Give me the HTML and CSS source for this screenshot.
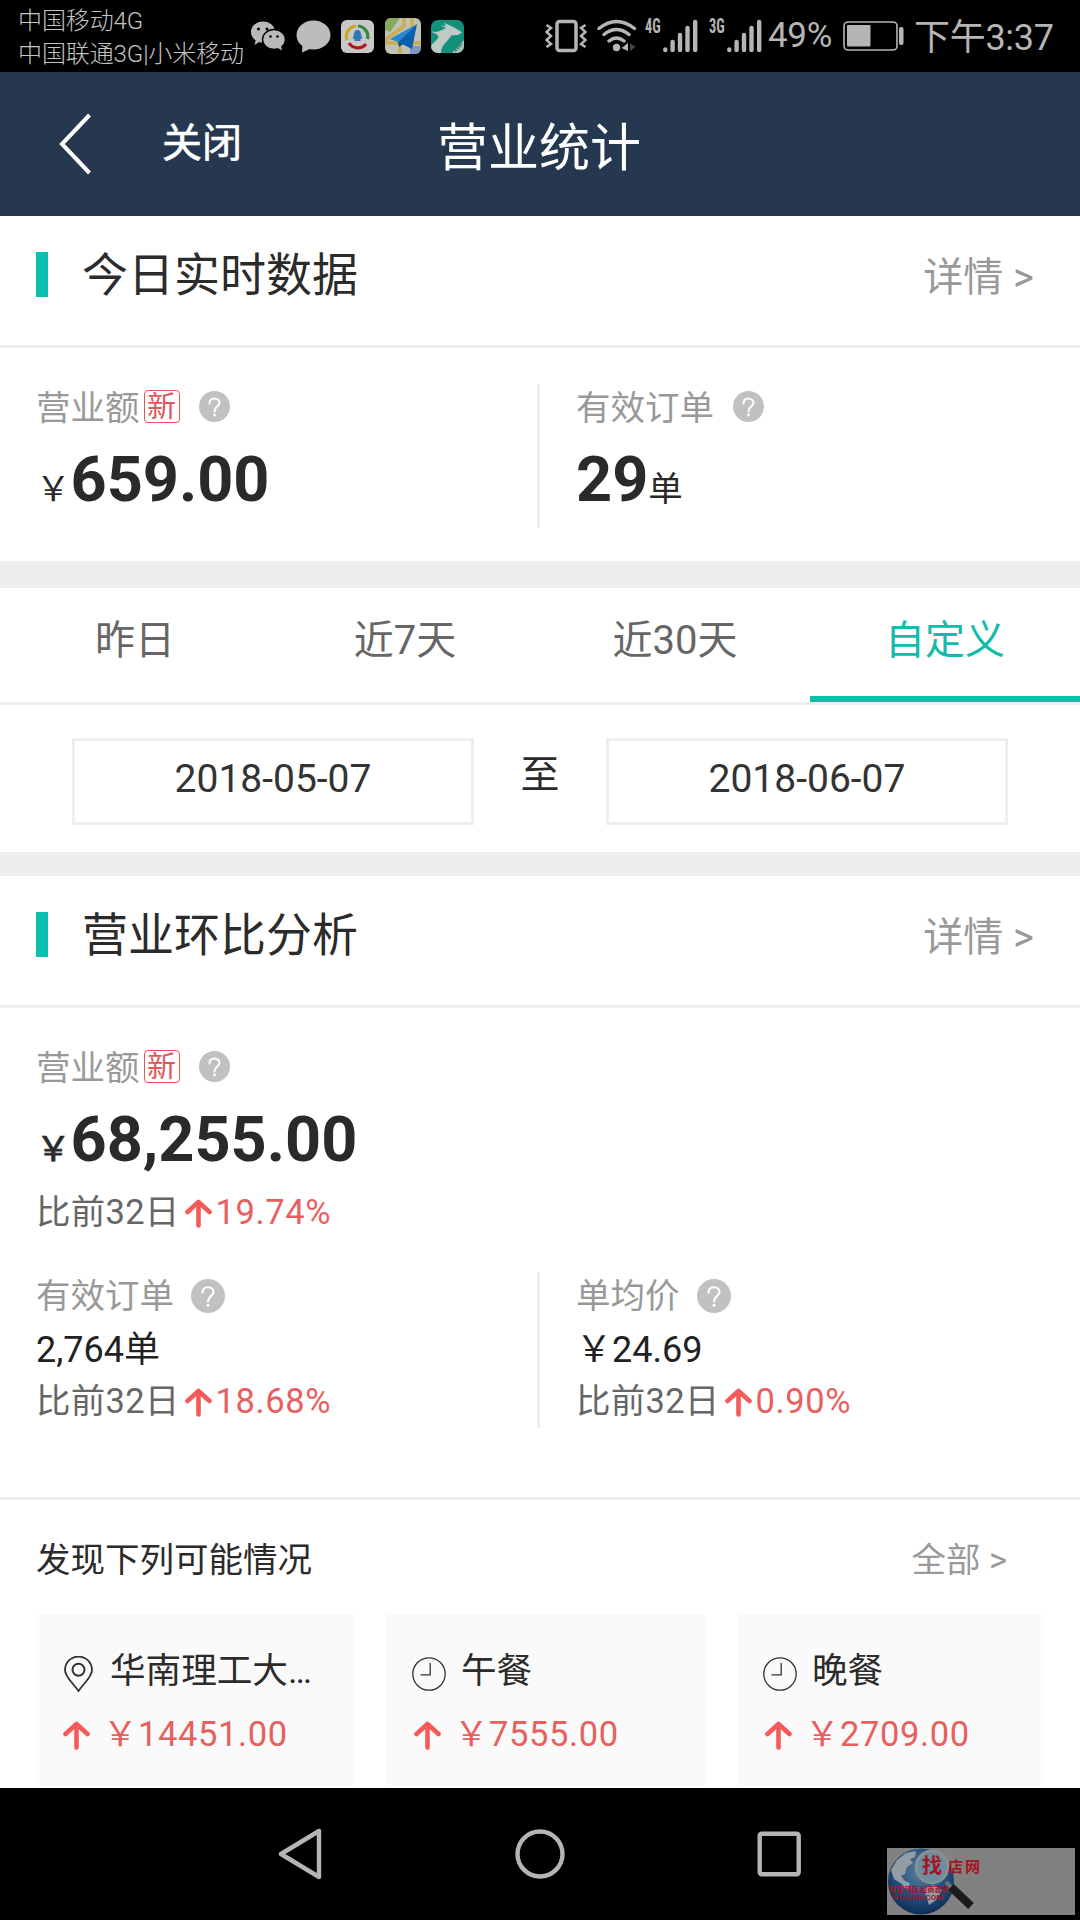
FILE: index.html
```html
<!DOCTYPE html>
<html lang="zh-CN">
<head>
<meta charset="utf-8">
<title>营业统计</title>
<link rel="stylesheet" href="styles.css">
</head>
<body>
<svg class="defs" aria-hidden="true">
  <symbol id="arrow" viewBox="0 0 27 29"><path d="M2.500 13 13.500 3 24.500 13M13.500 3.500V26.500" fill="none" stroke="#f45b58" stroke-width="4.600" stroke-linecap="round" stroke-linejoin="round"/></symbol>
  <symbol id="help" viewBox="0 0 31 31"><circle cx="15.500" cy="15.500" r="15.500" fill="#c1c1c1"/><path d="M10.500 12.500C10.500 9.200 12.600 7.500 15.500 7.500S20.500 9.400 20.500 12C20.500 15.200 15.500 15.800 15.500 20.500" fill="none" stroke="#fff" stroke-width="2" stroke-linecap="round"/><circle cx="15.500" cy="24" r="1.400" fill="#fff"/></symbol>
  <symbol id="bars" viewBox="0 0 35 34"><path d="M2.300 30.500V31M9.600 23V31M17 16V31M24.500 9V31M32.200 3V31" fill="none" stroke="#b5b5b5" stroke-width="4.400" stroke-linecap="round"/></symbol>
  <symbol id="clock" viewBox="0 0 34 34"><circle cx="17" cy="17" r="16.200" fill="none" stroke="#333" stroke-width="1.300"/><path d="M18.200 6V17.800H8.500" fill="none" stroke="#333" stroke-width="1.300"/></symbol>
</svg>

<header class="status">
  <div class="carriers"><div>中国移动4G</div><div>中国联通3G|小米移动</div></div>
  <div class="apps">
    <svg width="34" height="30" viewBox="0 0 34 30"><ellipse cx="12" cy="11" rx="12" ry="10.500" fill="#b9b9b9"/><path d="M5 18 3.500 24 9 20.500Z" fill="#b9b9b9"/><ellipse cx="23" cy="18.500" rx="11.500" ry="10" fill="#b9b9b9" stroke="#000" stroke-width="1.400"/><path d="M26 26.500 31 29.500 30 24.500Z" fill="#b9b9b9"/><g fill="#000"><circle cx="7.500" cy="8" r="1.500"/><circle cx="16" cy="8" r="1.500"/><circle cx="19.500" cy="15.500" r="1.300"/><circle cx="26.500" cy="15.500" r="1.300"/></g></svg>
    <svg width="35" height="33" viewBox="0 0 35 33"><ellipse cx="17.500" cy="15" rx="17" ry="14.500" fill="#bcbcbc"/><path d="M6.500 24 6 32.500 16 28Z" fill="#bcbcbc"/></svg>
    <svg width="33" height="33" viewBox="0 0 33 33"><rect width="33" height="33" rx="6" fill="#c8c8c8"/><g fill="none" stroke-width="3.200"><path d="M15 6A10.500 10.500 0 0 0 6 20" stroke="#c9a81c"/><path d="M17 6A10.500 10.500 0 0 1 26.500 19" stroke="#2d8a3b"/><path d="M8 23A10.500 10.500 0 0 0 25 24" stroke="#b3141d"/></g><path d="M16.500 10C13.500 10 13 12.500 13 14.500L11.500 19 13.500 18.500V21H19.500V18.500L21.500 19 20 14.500C20 12.500 19.500 10 16.500 10Z" fill="#2d78b5"/></svg>
    <svg width="36" height="36" viewBox="0 0 36 36"><rect width="36" height="36" rx="6" fill="#bfc2b4"/><path d="M6 0H15L5 14 0 12V6A6 6 0 0 1 6 0Z" fill="#86a95c"/><path d="M19 0V8L0 22M0 25H36M15 36V24M27 36V0" fill="none" stroke="#c9ad52" stroke-width="3.500"/><path d="M25 28H36V30A6 6 0 0 1 30 36H25Z" fill="#7f96c8"/><path d="M32 6 5 21 13 24Z" fill="#2589d6"/><path d="M32 6 13 24 27 31Z" fill="#0c5faf"/><path d="M13 24 14 29 18 26Z" fill="#0a4a87"/></svg>
    <svg width="33" height="33" viewBox="0 0 33 33"><rect width="33" height="33" rx="7" fill="#11917b"/><path d="M1 11.500C7 13 11 10 15 8L10 5.500 15 6 13 3 18 5C24 8 28 10 31 12.500L27 15 20 15.500C19 20 10 24 10 33H7A7 7 0 0 1 0 26C2 22 9 19 7 15.500 5 13 1 13 1 11.500Z" fill="#bfcac5"/><path d="M33 20V27A7 7 0 0 1 26 33H21Z" fill="#aebdb8"/><path d="M24 31 31 24" stroke="#3b7468" stroke-width="2" stroke-dasharray="2 1"/></svg>
  </div>
  <div class="signals">
    <svg class="vibrate" width="42" height="34" viewBox="0 0 42 34"><rect x="12" y="2.500" width="19" height="29" rx="2.500" fill="none" stroke="#b5b5b5" stroke-width="3.500"/><path d="M1.500 6 6 9 1.500 13 6 17 1.500 21 6 25 1.500 28M40.500 6 36 9 40.500 13 36 17 40.500 21 36 25 40.500 28" fill="none" stroke="#b5b5b5" stroke-width="2.500"/></svg>
    <svg class="wifi" width="40" height="34" viewBox="0 0 40 34"><g fill="none" stroke="#b5b5b5" stroke-width="3.400" stroke-linecap="round"><path d="M2 9.500Q19.500-4.500 37.500 9.500M7 15.500Q19.500 5.500 32 15.500M12 22Q19.500 16 27 22"/></g><circle cx="19.500" cy="28.500" r="3.700" fill="#b5b5b5"/><path d="M31 24V32L24.500 29Z" fill="#b5b5b5"/><path d="M33 24V32L38.500 28Z" fill="#444"/></svg>
    <span class="net">4G</span><svg class="bars" width="35" height="34"><use href="#bars"/></svg>
    <span class="net second">3G</span><svg class="bars" width="35" height="34"><use href="#bars"/></svg>
    <span class="percent">49%</span>
    <svg class="battery" width="61" height="30" viewBox="0 0 61 30"><rect x="1" y="1" width="53" height="28" rx="4" fill="none" stroke="#b5b5b5" stroke-width="1.600"/><rect x="4" y="4" width="23.500" height="21.500" rx="1" fill="#b5b5b5"/><rect x="56" y="6" width="4.500" height="18" rx="2" fill="#b5b5b5"/></svg>
    <span class="time">下午3:37</span>
  </div>
</header>

<nav class="titlebar">
  <div class="left">
    <svg width="33" height="64" viewBox="0 0 33 64"><path d="M30.500 3 3 32 30.500 61" fill="none" stroke="#fff" stroke-width="4"/></svg>
    <span class="close">关闭</span>
  </div>
  <h1>营业统计</h1>
</nav>

<main>
  <section>
    <div class="head"><i class="mark"></i><h2>今日实时数据</h2><a class="more">详情 &gt;</a></div>
    <div class="today">
      <div class="cell">
        <div class="label">营业额<span class="new">新</span><svg class="help"><use href="#help"/></svg></div>
        <div class="big"><small>￥</small>659.00</div>
      </div>
      <div class="cell">
        <div class="label">有效订单<svg class="help"><use href="#help"/></svg></div>
        <div class="big">29<small>单</small></div>
      </div>
    </div>
  </section>

  <section class="range">
    <div class="tabs"><span>昨日</span><span>近7天</span><span>近30天</span><span class="active">自定义</span></div>
    <div class="dates"><div class="date">2018-05-07</div><span class="to">至</span><div class="date">2018-06-07</div></div>
  </section>

  <section>
    <div class="head"><i class="mark"></i><h2>营业环比分析</h2><a class="more">详情 &gt;</a></div>
    <div class="summary">
      <div class="label">营业额<span class="new">新</span><svg class="help"><use href="#help"/></svg></div>
      <div class="big"><small class="strong">￥</small>68,255.00</div>
      <div class="compare">比前32日<svg class="arrow"><use href="#arrow"/></svg><b>19.74%</b></div>
    </div>
    <div class="detail">
      <div class="cell">
        <div class="label">有效订单<svg class="help large"><use href="#help"/></svg></div>
        <div class="value">2,764单</div>
        <div class="compare">比前32日<svg class="arrow"><use href="#arrow"/></svg><b>18.68%</b></div>
      </div>
      <div class="cell">
        <div class="label">单均价<svg class="help large"><use href="#help"/></svg></div>
        <div class="value">￥24.69</div>
        <div class="compare">比前32日<svg class="arrow"><use href="#arrow"/></svg><b>0.90%</b></div>
      </div>
    </div>
  </section>

  <section class="found">
    <div class="found-head"><h3>发现下列可能情况</h3><a>全部 &gt;</a></div>
    <div class="cards">
      <div class="card">
        <div class="name"><svg width="34" height="36" viewBox="0 0 34 36"><path d="M17.500 35C12 27 4 21 4 14A13.500 13.500 0 0 1 31 14C31 21 23 27 17.500 35Z" fill="none" stroke="#333" stroke-width="1.800"/><circle cx="17.500" cy="13.800" r="6" fill="none" stroke="#333" stroke-width="2"/></svg>华南理工大…</div>
        <div class="gain"><svg class="arrow"><use href="#arrow"/></svg>￥14451.00</div>
      </div>
      <div class="card">
        <div class="name"><svg width="34" height="34"><use href="#clock"/></svg>午餐</div>
        <div class="gain"><svg class="arrow"><use href="#arrow"/></svg>￥7555.00</div>
      </div>
      <div class="card">
        <div class="name"><svg width="34" height="34"><use href="#clock"/></svg>晚餐</div>
        <div class="gain"><svg class="arrow"><use href="#arrow"/></svg>￥2709.00</div>
      </div>
    </div>
  </section>
</main>

<footer class="navbar">
  <svg width="46" height="54" viewBox="0 0 46 54"><path d="M41 4V50L3 27Z"/></svg>
  <svg width="52" height="52" viewBox="0 0 52 52"><circle cx="26" cy="26" r="22.500"/></svg>
  <svg width="46" height="46" viewBox="0 0 46 46"><rect x="3.700" y="2.700" width="39" height="40.600" rx="2"/></svg>
  <div class="stamp">
    <svg width="90" height="67" viewBox="0 0 90 67">
      <defs><radialGradient id="sea" cx=".5" cy=".35" r=".65"><stop offset="0" stop-color="#5d7f9d"/><stop offset=".6" stop-color="#23507f"/><stop offset="1" stop-color="#0d2f55"/></radialGradient></defs>
      <circle cx="34" cy="33.500" r="33" fill="url(#sea)"/>
      <path d="M4 22 10 12 19 5 29 3 28 9 23 11 26 15 20 19 18 26 14 28 18 33 23 35 20 43 15 36 7 31ZM37 41 46 37 55 42 49 52 42 57Z" fill="#949da3"/>
      <path d="M59 34 66 41" stroke="#707070" stroke-width="4"/><path d="M64 39 84 58" stroke="#1b1b1b" stroke-width="8"/>
      <circle cx="45" cy="19" r="16" fill="#6b8da0" stroke="#8b9193" stroke-width="2.500"/>
    </svg>
    <span class="find">找</span><span class="shop">店网</span>
    <span class="slogan">找店 转店 经商首选</span><span class="site">010ZDW.COM</span>
  </div>
</footer>
</body>
</html>
```
FILE: styles.css
```css
* { box-sizing: border-box; }
body {
  margin: 0;
  width: 1080px;
  height: 1920px;
  overflow: hidden;
  display: flex;
  flex-direction: column;
  background: #fff;
  color: #2b2b2b;
  font-family: Roboto, "Noto Sans CJK SC", sans-serif;
}
h1, h2, h3 { margin: 0; font-weight: 400; }
svg { flex: none; display: block; }
.defs { position: absolute; width: 0; height: 0; }

/* system status bar */
.status {
  height: 72px;
  flex: none;
  display: flex;
  background: #000;
  color: #b5b5b5;
}
.carriers {
  width: 251px;
  padding: 5px 0 0 18px;
  font-size: 24px;
  line-height: 33px;
  white-space: nowrap;
  font-weight: 300;
  letter-spacing: -.1px;
  color: #c4c4c4;
}
.apps { display: flex; align-items: center; gap: 10.500px; width: 294px; }
.signals { display: flex; align-items: center; height: 72px; white-space: nowrap; }
.vibrate { margin-right: 10px; }
.wifi { margin-right: 8px; }
.net {
  width: 18px;
  align-self: flex-start;
  margin-top: 15px;
  font: 700 20px/23px "Roboto Condensed", Roboto, sans-serif;
  transform: scaleX(.72);
  transform-origin: left;
}
.net.second { margin-left: 11px; }
.percent { width: 81px; padding-left: 6px; font-size: 35px; line-height: 72px; height: 72px; letter-spacing: -.3px; }
.battery { margin-right: 10px; }
.time { font-size: 36px; line-height: 76px; height: 72px; letter-spacing: -.3px; }

/* page title bar */
.titlebar {
  height: 144px;
  flex: none;
  display: grid;
  grid-template-columns: 1fr auto 1fr;
  background: #25384f;
  color: #fff;
}
.left { display: flex; align-items: center; padding-left: 59px; height: 143px; }
.close { margin-left: 70px; font-size: 40px; line-height: 60px; -webkit-text-stroke: .6px #fff; }
.titlebar h1 { font-size: 51px; line-height: 153px; height: 144px; margin-left: -2px; }

main { height: 1572px; flex: none; overflow: hidden; }

.head {
  display: flex;
  align-items: flex-start;
  height: 132px;
  padding: 36px 46px 0 36px;
  border-bottom: 3px solid #eee;
}
.mark { width: 12px; height: 45px; background: #09c1ae; }
.head h2 { margin-left: 34px; font-size: 46px; line-height: 47px; }
.more { margin-left: auto; color: #999; font-size: 40px; line-height: 52px; }

.label { display: flex; align-items: center; height: 46px; font-size: 34.500px; line-height: 46px; color: #999; }
.new {
  width: 36px;
  height: 33px;
  margin: 0 0 3px 4px;
  border: 1.500px solid #e0565a;
  border-radius: 4px;
  color: #e0565a;
  font-size: 29px;
  line-height: 33px;
  text-align: center;
}
.help { width: 31px; height: 31px; margin: 0 0 3px 19px; }
.help.large { width: 34px; height: 34px; margin: 0 0 0 17px; }
.big { font-size: 63px; line-height: 72px; height: 70px; font-weight: 700; color: #2a2a2a; }
.big small { font-size: 34.500px; line-height: 1; font-weight: 400; }
.big .strong { -webkit-text-stroke: .9px #2a2a2a; }
.compare { display: flex; align-items: center; height: 44px; font-size: 34.500px; line-height: 44px; color: #666; letter-spacing: .25px; }
.compare b { font-weight: 400; color: #e7605f; letter-spacing: .6px; }
.compare .arrow { width: 27px; height: 29px; margin: 3px 4px 0 5px; }

.today { display: grid; grid-template-columns: 1fr 1fr; height: 213px; padding-top: 36px; }
.today .cell { height: 144px; padding: 1px 0 0 36px; }
.cell:first-child { border-right: 3px solid #eee; }
.today .big { margin-top: 13px; }

.range { border-top: 27px solid #eee; border-bottom: 24px solid #eee; }
.tabs {
  display: grid;
  grid-template-columns: repeat(4, 1fr);
  height: 117px;
  border-bottom: 3px solid #eee;
  font-size: 40px;
  line-height: 105px;
  text-align: center;
  color: #666;
}
.tabs .active { color: #13bbaa; border-bottom: 6px solid #13bbaa; }
.dates { display: flex; justify-content: space-between; height: 147px; padding: 33px 72px 0; }
.date {
  width: 402px;
  height: 87px;
  border: 3px solid #eee;
  text-align: center;
  font-size: 39px;
  line-height: 77px;
  color: #333;
}
.to { font-size: 39px; line-height: 74px; }

.summary { padding: 37px 0 0 36px; height: 264px; }
.summary .big { margin-top: 13px; }
.summary .compare { margin-top: 16px; }
.detail { display: grid; grid-template-columns: 1fr 1fr; height: 228px; border-bottom: 3px solid #eee; }
.detail .cell { height: 156px; padding: 1px 0 0 36px; }
.value { height: 60px; font-size: 36px; line-height: 62px; color: #222; }

.found-head {
  display: flex;
  justify-content: space-between;
  height: 114px;
  padding: 0 73px 0 36px;
  font-size: 34.500px;
  line-height: 120px;
}
.found-head h3 { font-size: inherit; }
.found-head a { color: #999; }
.cards { display: grid; grid-template-columns: 318px 318px 306px; gap: 33px; padding-left: 36px; height: 172px; }
.card { background: #fafafa; padding: 31px 0 0 25px; white-space: nowrap; }
.name { display: flex; align-items: center; gap: 15px; height: 52px; font-size: 35.600px; line-height: 52px; }
.name svg { margin-top: 6px; }
.gain { display: flex; align-items: center; height: 50px; margin-top: 12px; font-size: 34.500px; line-height: 50px; color: #e7605f; letter-spacing: .6px; }
.gain .arrow { width: 27px; height: 29px; margin: 2px 13px 0 2px; }

/* system navigation */
.navbar {
  position: relative;
  height: 132px;
  flex: none;
  display: flex;
  align-items: center;
  justify-content: center;
  gap: 190px;
  background: #000;
}
.navbar > svg { fill: none; stroke: #b5b5b5; stroke-width: 4.400px; stroke-linejoin: round; }
.stamp {
  position: absolute;
  left: 887px;
  top: 60px;
  width: 188px;
  height: 67px;
  background: #818181;
  color: #a31520;
  font-weight: 700;
  white-space: nowrap;
}
.stamp span { position: absolute; line-height: 1; }
.find { left: 35px; top: 8px; font-size: 20px; }
.shop { left: 61px; top: 12px; font-size: 15px; letter-spacing: 2px; }
.slogan { left: 2px; top: 39px; font-size: 7px; }
.site { left: 6px; top: 46px; font-size: 8px; }
```
